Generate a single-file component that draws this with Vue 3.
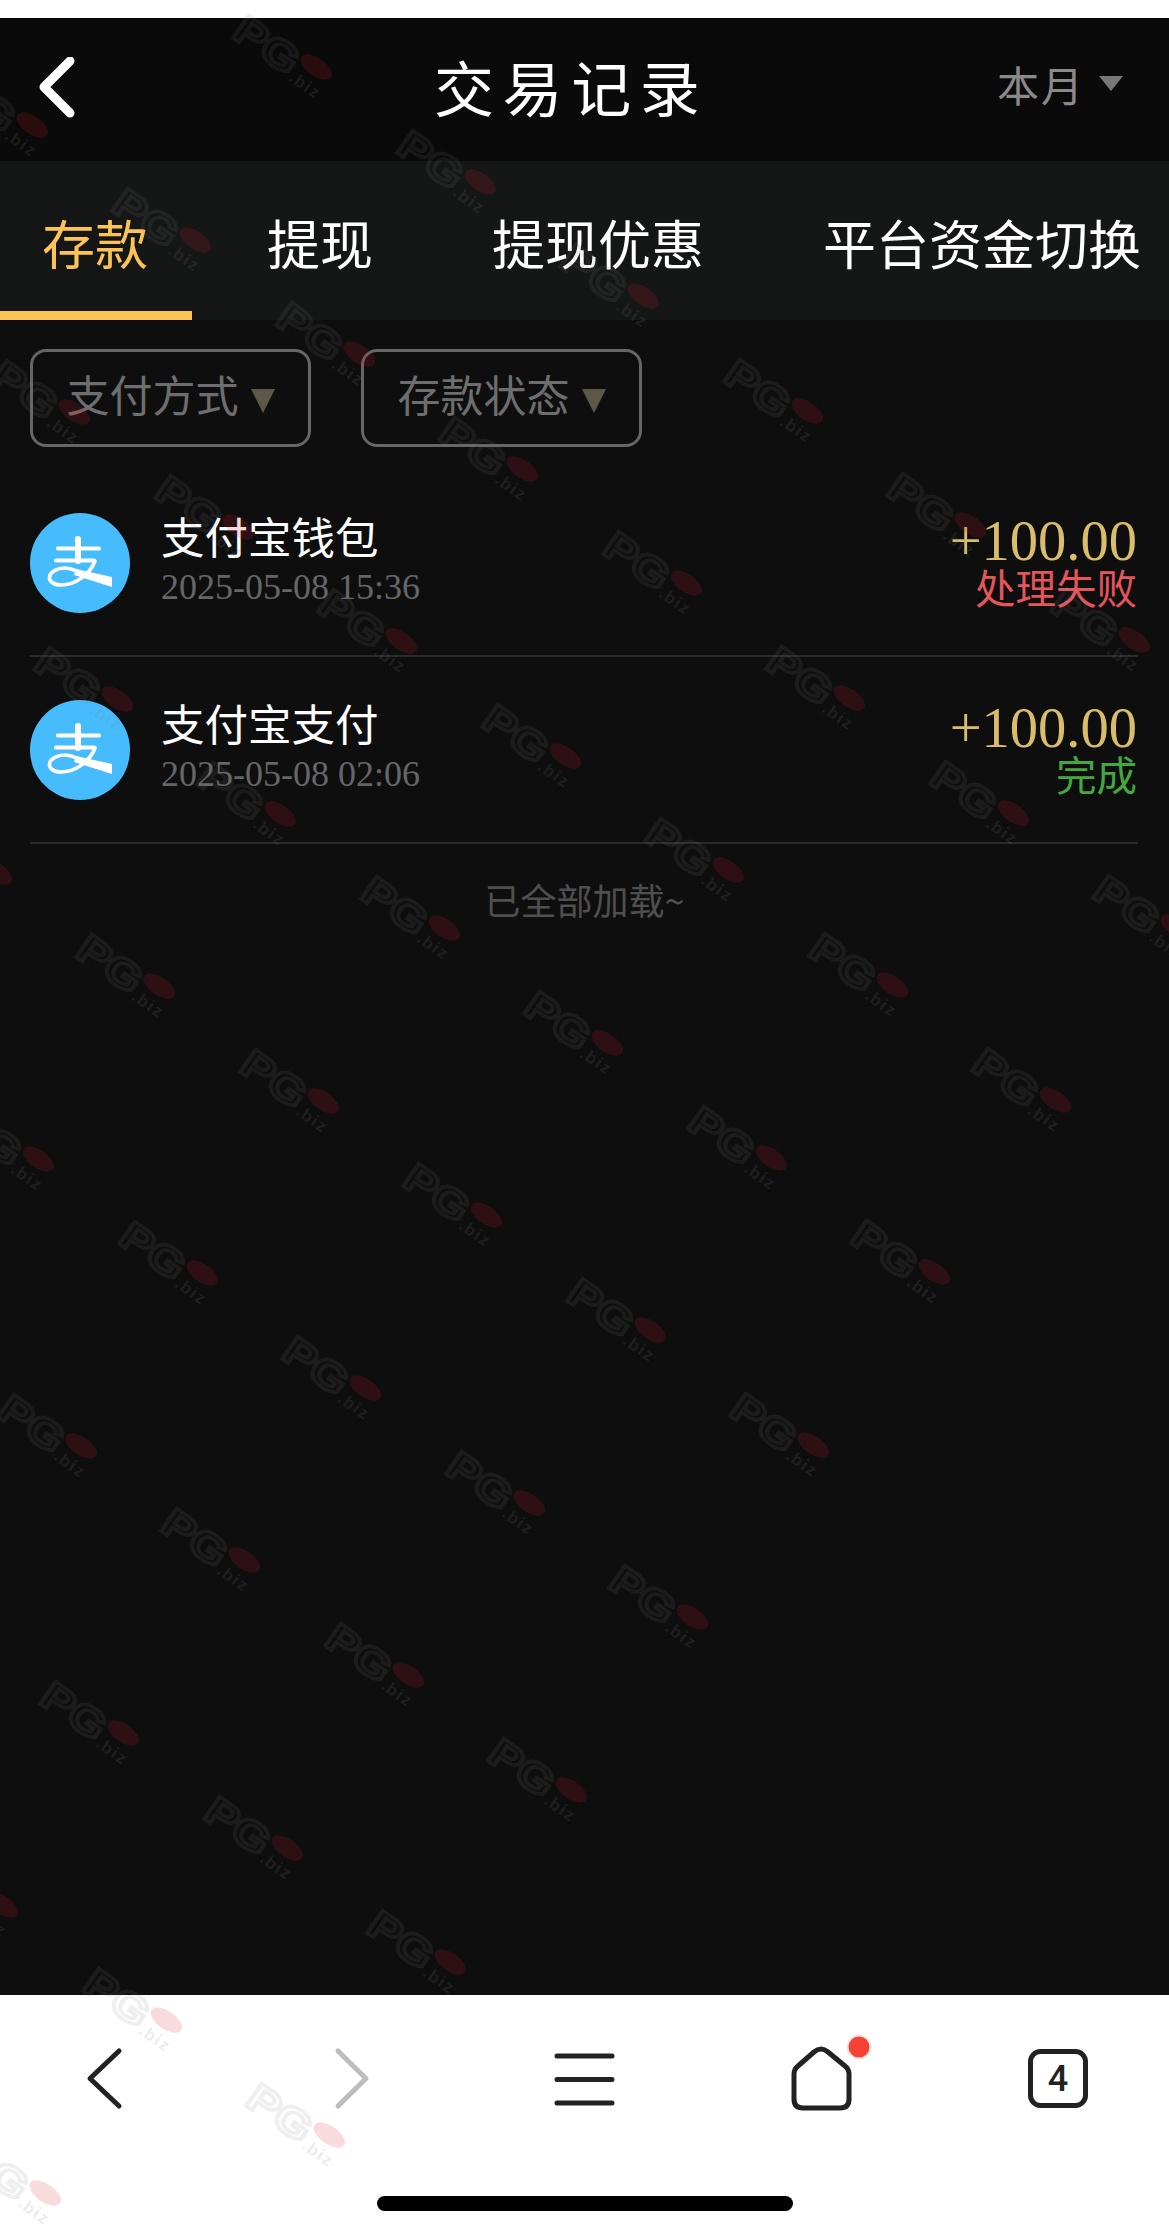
<template>
  <div class="page">
    <div class="status-strip"></div>

    <main class="screen">
      <header class="topbar">
        <svg class="back-icon" width="38" height="62" viewBox="0 0 38 62">
          <path d="M32 4 L6 30 L32 56" fill="none" stroke="#fff" stroke-width="9" stroke-linecap="round" stroke-linejoin="round" />
        </svg>
        <h1 class="title">交易记录</h1>
        <div class="period">
          <span>本月</span>
          <svg width="24" height="15" viewBox="0 0 24 15"><polygon points="0,0 24,0 12,15" fill="#777" /></svg>
        </div>
      </header>

      <nav class="tabs">
        <div
          v-for="tab in tabs"
          :key="tab"
          class="tab"
          :class="{ 'tab--active': tab === activeTab }"
        >
          {{ tab }}
        </div>
      </nav>

      <div class="filters">
        <div v-for="filter in filters" :key="filter" class="filter">
          <span class="filter__label">{{ filter }}</span>
          <svg class="filter__arrow" width="24" height="24" viewBox="0 0 24 24"><polygon points="0,0 24,0 12,24" fill="#5d5845" /></svg>
        </div>
      </div>

      <ul class="records">
        <li v-for="record in records" :key="record.date" class="record">
          <svg class="alipay" width="100" height="100" viewBox="0 0 100 100">
            <circle cx="50" cy="50" r="50" fill="#47bcfd" />
            <g fill="none" stroke="#fff" stroke-linecap="round">
              <path d="M28 35.5 H69 M26 47.5 H64" stroke-width="4.2" />
              <path d="M48 26 V48" stroke-width="6" />
              <path d="M65 48 C60 61 46 72 31 72 C23 72 19 68 19.5 64 C20 59 27 55 35 55 C40 55 44 57 49 59" stroke-width="3.6" />
            </g>
            <path d="M46 56 L82 64 L82 74 L44 62 Z" fill="#fff" />
          </svg>
          <div class="record__info">
            <div class="record__name">{{ record.name }}</div>
            <div class="record__date">{{ record.date }}</div>
          </div>
          <div class="record__side">
            <div class="record__amount">{{ record.amount }}</div>
            <div class="record__status" :class="record.statusClass">{{ record.status }}</div>
          </div>
        </li>
      </ul>

      <div class="end-note">已全部加载~</div>
    </main>

    <footer class="browser-bar">
      <div class="browser-icons">
        <svg class="bar-icon" viewBox="0 0 60 70">
          <path d="M44 6 L15 33.5 L44 61" stroke="#222" />
        </svg>
        <svg class="bar-icon" viewBox="0 0 60 70">
          <path d="M25 6 L53 33.5 L25 61" stroke="#bdbdbd" />
        </svg>
        <svg class="bar-icon" viewBox="0 0 60 70">
          <path d="M5 11 H60 M5 34.5 H60 M5 58 H60" stroke="#222" />
        </svg>
        <svg class="bar-icon" viewBox="0 0 60 70">
          <path d="M24 7 Q31 1 38 7 L55 21 Q59 24 59 29 V54 Q59 63 50 63 H13 Q4 63 4 54 V29 Q4 24 8 21 Z" stroke="#222" />
          <circle cx="69" cy="2" r="11.5" fill="#f44336" stroke="#fbe3e0" stroke-width="2" />
        </svg>
        <svg class="bar-icon" viewBox="0 0 60 70">
          <rect x="2.5" y="6.5" width="55" height="54" rx="10" stroke="#222" />
          <text x="30" y="46" class="tab-count">4</text>
        </svg>
      </div>
      <div class="home-indicator"></div>
    </footer>

    <div class="watermarks">
      <svg
        v-for="mark in watermarks"
        :key="mark.id"
        class="watermark"
        :style="{ left: mark.x + 'px', top: mark.y + 'px' }"
        width="120"
        height="60"
        viewBox="0 0 120 60"
      >
        <text x="2" y="44" class="watermark__pg" textLength="70" lengthAdjust="spacingAndGlyphs">PG</text>
        <ellipse cx="90" cy="20" rx="18" ry="9" class="watermark__pill" />
        <text x="74" y="47" class="watermark__biz">.biz</text>
      </svg>
    </div>
  </div>
</template>

<script setup>
const tabs = ["存款", "提现", "提现优惠", "平台资金切换"];
const activeTab = "存款";
const filters = ["支付方式", "存款状态"];

const records = [
  {
    name: "支付宝钱包",
    date: "2025-05-08 15:36",
    amount: "+100.00",
    status: "处理失败",
    statusClass: "record__status--failed",
  },
  {
    name: "支付宝支付",
    date: "2025-05-08 02:06",
    amount: "+100.00",
    status: "完成",
    statusClass: "record__status--done",
  },
];

// the watermark repeats on a skewed lattice, and stops at its top right and bottom right
const watermarks = [];
for (let i = -8; i <= 6; i++) {
  for (let j = 0; j <= 9; j++) {
    const x = 286 + i * 163.5 - j * 121;
    const y = 58 + i * 114.6 + j * 172.5;
    if (x > -60 && x < 1230 && y > -40 && y < 2280) {
      watermarks.push({ id: `${i}-${j}`, x: x - 60, y: y - 30 });
    }
  }
}
</script>

<style>
html,
body {
  margin: 0;
  background: #fff;
}
</style>

<style scoped>
.page {
  position: relative;
  width: 1169px;
  height: 2235px;
  overflow: hidden;
  display: flex;
  flex-direction: column;
  font-family: "Noto Sans CJK SC", "Liberation Sans", sans-serif;
  background: #fff;
}

.status-strip {
  height: 18px;
  flex: none;
}

.screen {
  flex: 1;
  background: #0e0e0f;
  min-height: 0;
}

.topbar {
  height: 143px;
  display: flex;
  align-items: center;
  padding: 0 46px 0 38px;
  background: #0a0a0a;
}

.back-icon {
  flex: none;
  margin-top: -4px;
}

.title {
  margin: -8px 0 0 358px;
  font-size: 60px;
  font-weight: 400;
  letter-spacing: 8.6px;
  line-height: 1;
  color: #fff;
}

.period {
  margin: -13px 0 0 auto;
  display: flex;
  align-items: center;
  gap: 14px;
  font-size: 42px;
  letter-spacing: 2px;
  color: #8a8a8a;
}

.tabs {
  height: 159px;
  display: flex;
  gap: 33px;
  background: #151616;
}

.tab {
  padding: 3px 44px 0 42px;
  display: flex;
  align-items: center;
  font-size: 53px;
  color: #fff;
  white-space: nowrap;
  position: relative;
}

.tab--active {
  color: #fdc355;
}

.tab--active::after {
  content: "";
  position: absolute;
  left: 0;
  right: 0;
  bottom: 0;
  height: 9px;
  background: #fdc355;
}

.filters {
  display: flex;
  gap: 50px;
  padding: 29px 30px 23px;
}

.filter {
  width: 281px;
  height: 98px;
  box-sizing: border-box;
  border: 3px solid #666;
  border-radius: 16px;
  display: flex;
  align-items: center;
  justify-content: center;
  gap: 12px;
  font-size: 43px;
  color: #6e6e6e;
}

.filter__label {
  margin-top: -10px;
}

.filter__arrow {
  margin-top: 6px;
}

.records {
  list-style: none;
  margin: 0;
  padding: 0 31px 0 30px;
}

.record {
  height: 187px;
  box-sizing: border-box;
  border-bottom: 2px solid #2a2a2a;
  padding-top: 43px;
  display: flex;
  align-items: flex-start;
}

.alipay {
  flex: none;
}

.record__info {
  margin-left: 31px;
  margin-top: -2px;
}

.record__name {
  font-size: 43.5px;
  line-height: 50px;
  color: #fff;
}

.record__date {
  margin-top: 4px;
  font-family: "Liberation Serif", serif;
  font-size: 36px;
  line-height: 44px;
  color: #666;
}

.record__side {
  margin-left: auto;
  padding-right: 1px;
  text-align: right;
}

.record__amount {
  font-family: "Liberation Serif", serif;
  font-size: 56.5px;
  line-height: 56px;
  color: #d9bd6a;
}

.record__status {
  margin-top: -2px;
  font-size: 40.5px;
  line-height: 40px;
}

.record__status--failed {
  color: #e5565b;
}

.record__status--done {
  color: #43a83f;
}

.end-note {
  padding-top: 30px;
  text-align: center;
  font-size: 36px;
  line-height: 50px;
  color: #4f4f4f;
}

.browser-bar {
  height: 240px;
  flex: none;
  display: flex;
  flex-direction: column;
  align-items: center;
  background: #fff;
}

.browser-icons {
  width: 100%;
  box-sizing: border-box;
  padding: 50px 81px 0 75px;
  display: flex;
  justify-content: space-between;
}

.bar-icon {
  width: 60px;
  height: 70px;
  overflow: visible;
  fill: none;
  stroke-width: 5;
  stroke-linecap: round;
  stroke-linejoin: round;
}

.tab-count {
  font-family: Roboto, sans-serif;
  font-size: 36px;
  font-weight: 500;
  fill: #222;
  stroke: none;
  text-anchor: middle;
}

.home-indicator {
  width: 416px;
  height: 15px;
  margin-top: 81px;
  border-radius: 8px;
  background: #000;
}

.watermarks {
  position: absolute;
  inset: 0;
  pointer-events: none;
}

.watermark {
  position: absolute;
  transform: rotate(35deg);
  overflow: visible;
}

.watermark__pg {
  font-family: "Liberation Sans", sans-serif;
  font-size: 40px;
  font-weight: 700;
  fill: none;
  stroke: rgba(128, 128, 128, 0.14);
  stroke-width: 3.5;
}

.watermark__pill {
  fill: rgba(220, 30, 50, 0.16);
}

.watermark__biz {
  font-family: "Liberation Sans", sans-serif;
  font-size: 17px;
  font-weight: 700;
  letter-spacing: 1.5px;
  fill: rgba(128, 128, 128, 0.16);
}
</style>
